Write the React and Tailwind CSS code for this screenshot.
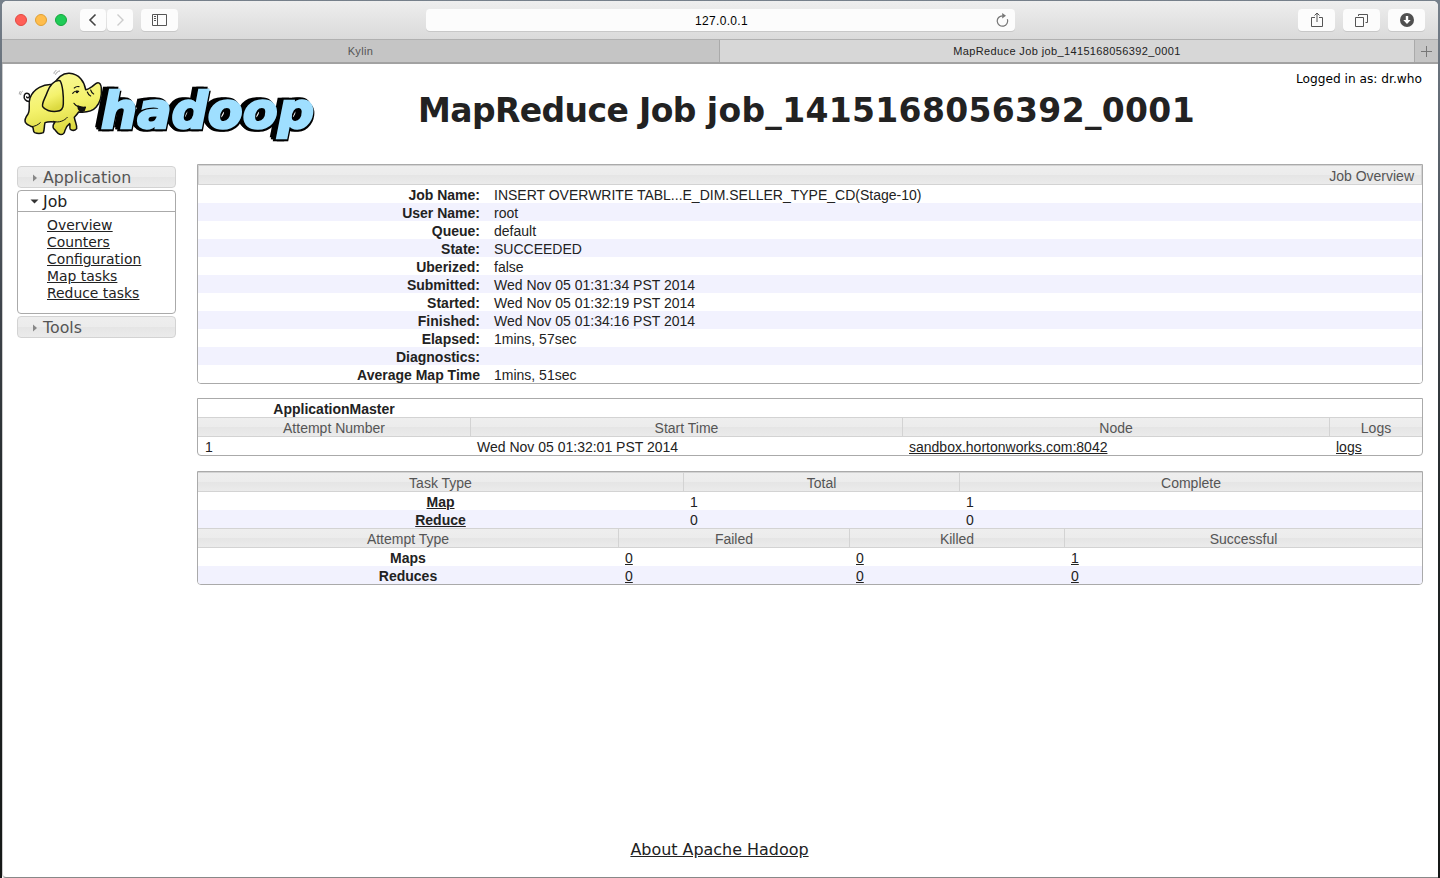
function Arrow({ open }) {
  return (
    <svg className="ml-[11px] mr-1 h-3 w-2.5 shrink-0" viewBox="0 0 10 12">
      <path d={open ? "M1.500 3.500h8L5.500 7.500z" : "M4 2.500l4 3.500-4 3.500z"} fill={open ? "#333" : "#888"} />
    </svg>
  );
}

const HEAD = "border-[#d3d3d3] bg-[linear-gradient(#eee_0%,#ececec_50%,#e5e5e5_50%,#ebebeb_100%)] text-center text-[#555]";

function HeadRow({ cols, cells }) {
  return (
    <div className={"grid " + cols}>
      {cells.map((c, i) => (
        <div key={c} className={HEAD + " h-5 border-y leading-[20px]" + (i < cells.length - 1 ? " border-r" : "")}>{c}</div>
      ))}
    </div>
  );
}

const overview = [
  ["Job Name:", "INSERT OVERWRITE TABL...E_DIM.SELLER_TYPE_CD(Stage-10)"],
  ["User Name:", "root"],
  ["Queue:", "default"],
  ["State:", "SUCCEEDED"],
  ["Uberized:", "false"],
  ["Submitted:", "Wed Nov 05 01:31:34 PST 2014"],
  ["Started:", "Wed Nov 05 01:32:19 PST 2014"],
  ["Finished:", "Wed Nov 05 01:34:16 PST 2014"],
  ["Elapsed:", "1mins, 57sec"],
  ["Diagnostics:", ""],
  ["Average Map Time", "1mins, 51sec"],
];

function Logo() {
  return (
    <svg className="h-[78px] w-[304px] overflow-visible" viewBox="16 66 304 78" role="img">
      <defs>
        <linearGradient id="skin" x1="0" y1="0" x2="0.3" y2="1">
          <stop offset="0" stopColor="#fbfba0" />
          <stop offset="0.6" stopColor="#f4f26c" />
          <stop offset="1" stopColor="#dcd940" />
        </linearGradient>
      </defs>
      <text
        x="101"
        y="127.500"
        textLength="213"
        lengthAdjust="spacingAndGlyphs"
        fill="#9fdfff"
        stroke="#9fdfff"
        strokeWidth="2.4"
        strokeLinejoin="miter"
        className="font-['DejaVu_Sans',sans-serif] text-[50px] font-bold italic [filter:drop-shadow(-4px_0_0_#000)_drop-shadow(1.5px_2px_0_#000)_drop-shadow(-1.5px_-2px_0_#000)]"
      >
        hadoop
      </text>
      <g transform="translate(16 66) scale(.3333)" fill="url(#skin)" stroke="#111" strokeWidth="4.500" strokeLinejoin="round" strokeLinecap="round">
        <path d="M42 106C30 108 22 98 25 88C29 78 44 82 40 92C38 97 33 96 32 93" fill="none" />
        <path d="M112 56C84 52 52 68 42 96C36 114 44 130 36 144C30 152 25 161 28 169C32 177 42 179 50 183C54 189 50 197 56 200C64 203 74 203 82 200C86 190 84 182 87 170C97 166 107 167 117 168C111 176 109 182 113 188C121 194 123 202 131 205C141 207 145 203 147 193C149 185 153 179 161 173C164 179 159 185 163 190C170 194 178 194 182 188C184 178 177 168 175 154C180 149 184 144 188 138C212 140 228 138 240 124C254 108 258 90 256 66C255 56 252 50 246 50C240 50 236 56 228 62C221 67 215 71 209 71C205 47 190 24 160 22C138 21 125 36 112 56z" />
        <path d="M132 44C114 40 100 62 94 78C88 96 76 112 80 122C86 132 104 138 122 136C136 135 142 128 142 114C143 90 140 56 132 44z" />
        <path d="M170 82c5-7 12-8 18-6M175 66c4-4 9-5 14-4M214 78c2 6 6 10 10 12M224 72c2 6 5 10 9 12M174 112c8 10 20 14 34 12" fill="none" strokeWidth="3.500" />
        <circle cx="183" cy="78" r="4" fill="#151515" stroke="none" />
        <path d="M186 120c0 12 8 20 18 14l4-10c-8 2-14-1-22-4z" fill="#151515" />
        <path d="M45 182c12 0 22-6 28-12M112 166c16 6 34-2 42-12" fill="none" strokeWidth="3" />
        <path d="M119 25c2-6 6-9 12-10M114 22c0-4 3-7 6-8M14 86c0-5 2-8 5-10M10 84c0-4 1-6 3-8" fill="none" stroke="#888" strokeWidth="2.500" />
      </g>
    </svg>
  );
}

const BTN = "flex h-[22px] items-center justify-center rounded bg-[#fcfcfc] shadow-[0_1px_0_#c8c8c8]";

export default function App() {
  return (
    <div className="h-[878px] w-[1440px] overflow-hidden bg-[linear-gradient(#76808b,#3e444b_35%,#202526_60%,#151817)] px-[2px] pt-px font-['Liberation_Sans',sans-serif]">
      <div className="flex h-[877px] flex-col overflow-hidden rounded-t-[5px] bg-white">
        <header className="flex h-[39px] shrink-0 items-center border-b border-[#b0b0b0] bg-[linear-gradient(#eeeeee,#dadada)] px-[13px]">
          <div className="flex gap-2">
            <i className="size-3 rounded-full border border-[#e14942] bg-[#ff5f57]" />
            <i className="size-3 rounded-full border border-[#dfa034] bg-[#ffbd4c]" />
            <i className="size-3 rounded-full border border-[#15a73c] bg-[#1fcb57]" />
          </div>
          <div className="ml-[13px] flex gap-px">
            <div className={BTN + " w-[26px]"}><svg width="10" height="14" viewBox="0 0 10 14" fill="none" stroke="#444" strokeWidth="1.6"><path d="M7.500 1.500L2 7l5.500 5.500" /></svg></div>
            <div className={BTN + " w-[26px]"}><svg width="10" height="14" viewBox="0 0 10 14" fill="none" stroke="#ccc" strokeWidth="1.4"><path d="M2.500 1.500L8 7l-5.500 5.500" /></svg></div>
          </div>
          <div className={BTN + " ml-2 w-[37px]"}><svg width="15" height="12" viewBox="0 0 15 12" fill="none" stroke="#555"><path d="M.5 .5h14v11H.5zM5.500 .5v11M2 2.500h2M2 4.500h2M2 6.500h2" /></svg></div>
          <div className="ml-[248px] flex h-[22px] w-[589px] items-center rounded bg-[#fcfcfc] shadow-[0_1px_0_#c8c8c8]">
            <div className="flex-1 pl-[21px] pt-px text-center text-[12px] tracking-[.33px] text-black">127.0.0.1</div>
            <svg className="mr-[6px]" width="13" height="14" viewBox="0 0 13 14" fill="none" stroke="#777" strokeWidth="1.2"><path d="M11.300 6.200a5.200 5.200 0 1 1-4.800-3.400" /><path d="M6.200 0L10 2.700 6.200 5.400z" fill="#777" stroke="none" /></svg>
          </div>
          <div className="ml-auto flex gap-2">
            <div className={BTN + " w-[37px]"}><svg width="12" height="16" viewBox="0 0 12 16" fill="none" stroke="#555"><path d="M4 5.500H.5v9h11v-9H8M6 10V1M3.500 3.500L6 1l2.500 2.500" /></svg></div>
            <div className={BTN + " w-[37px]"}><svg width="13" height="13" viewBox="0 0 13 13" fill="none" stroke="#555"><path d="M.5 3.500h8v9h-8zM3.500 2V.5h9v8H10.500" /></svg></div>
            <div className={BTN + " w-[37px]"}><svg width="14" height="14" viewBox="0 0 14 14"><circle cx="7" cy="7" r="7" fill="#505050" /><path d="M5.800 3h2.400v4h2.500L7 11 3.300 7h2.500z" fill="#fff" /></svg></div>
          </div>
        </header>
        <nav className="flex h-6 shrink-0 border-b-2 border-[#a2a2a2] text-center text-[11px] leading-[23px] tracking-[.37px]">
          <div className="w-[718px] border-r border-[#aaa] bg-[#c5c5c5] text-[#555]">Kylin</div>
          <div className="flex-1 bg-[#d7d7d7] text-[#222]">MapReduce Job job_1415168056392_0001</div>
          <div className="flex w-[24px] items-center justify-center border-l border-[#aaa] bg-[#c5c5c5]"><svg width="11" height="11" viewBox="0 0 11 11" stroke="#777"><path d="M5.500 0v11M0 5.500h11" /></svg></div>
        </nav>
        <div className="flex min-h-0 flex-1 flex-col rounded-bl border-b border-l border-b-[#888] border-l-[#ccc] text-[14px] text-[#222]">
          <div className="flex h-[100px] shrink-0 pl-[13px] pr-4 font-['DejaVu_Sans',sans-serif]">
            <div className="w-[304px] pt-[2px]"><Logo /></div>
            <h1 className="ml-[98px] mt-[25px] w-[790px] whitespace-nowrap text-[33px] font-bold leading-[44px]"><span className="tracking-[-.6px]">MapReduce Job </span><span className="tracking-[.33px]">job_1415168056392_0001</span></h1>
            <div className="ml-auto mt-[7px] whitespace-nowrap text-[12.200px] leading-4 text-black">Logged in as: dr.who</div>
          </div>
          <div className="flex items-start pl-[14px] pr-[15px]">
            <aside className="mt-[2px] flex w-[159px] shrink-0 flex-col gap-[2px] font-['DejaVu_Sans',sans-serif] text-[15.800px] leading-5">
              <div className={HEAD + " flex h-[22px] items-center rounded border pt-px"}><Arrow />Application</div>
              <div className="h-[124px] rounded border border-[#aaa]">
                <div className="flex h-[21px] items-center border-b border-[#aaa] pt-px"><Arrow open />Job</div>
                <div className="flex flex-col items-start pl-[29px] pt-[5px] text-[13.900px] leading-[17px] underline">
                  {["Overview", "Counters", "Configuration", "Map tasks", "Reduce tasks"].map((t) => <a key={t}>{t}</a>)}
                </div>
              </div>
              <div className={HEAD + " flex h-[22px] items-center rounded border pt-px"}><Arrow />Tools</div>
            </aside>
            <main className="ml-[21px] flex w-[1226px] flex-col">
              <section className="h-[220px] overflow-hidden rounded-b border border-[#aaa]">
                <div className={HEAD + " h-5 border pr-[7px] !text-right leading-[20px]"}>Job Overview</div>
                {overview.map(([k, v], i) => (
                  <div key={k} className={"grid h-[18px] grid-cols-[282px_1fr] gap-[14px] leading-[20px] " + (i % 2 ? "bg-[#f2f2fe]" : "bg-white")}>
                    <b className="text-right">{k}</b><span className="whitespace-nowrap">{v}</span>
                  </div>
                ))}
              </section>
              <section className="mt-[14px] h-[58px] overflow-hidden rounded-b border border-[#aaa]">
                <div className="h-[18px] w-[272px] text-center font-bold leading-5">ApplicationMaster</div>
                <HeadRow cols="grid-cols-[273px_432px_427px_92px]" cells={["Attempt Number", "Start Time", "Node", "Logs"]} />
                <div className="grid h-[18px] grid-cols-[272px_432px_427px_1fr] leading-[20px] *:pl-[7px]">
                  <span>1</span><span>Wed Nov 05 01:32:01 PST 2014</span><u>sandbox.hortonworks.com:8042</u><u>logs</u>
                </div>
              </section>
              <section className="mt-[15px] h-[114px] overflow-hidden rounded-b border border-[#aaa]">
                <HeadRow cols="grid-cols-[486px_276px_462px]" cells={["Task Type", "Total", "Complete"]} />
                {[["Map", "1", "1"], ["Reduce", "0", "0"]].map(([a, b, c], i) => (
                  <div key={a} className={"grid h-[18px] grid-cols-[485px_276px_1fr] leading-[20px] " + (i ? "bg-[#f2f2fe]" : "")}>
                    <b className="text-center underline">{a}</b><span className="pl-[7px]">{b}</span><span className="pl-[7px]">{c}</span>
                  </div>
                ))}
                <HeadRow cols="grid-cols-[421px_231px_215px_357px]" cells={["Attempt Type", "Failed", "Killed", "Successful"]} />
                {[["Maps", "0", "0", "1"], ["Reduces", "0", "0", "0"]].map(([a, b, c, d], i) => (
                  <div key={a} className={"grid h-[18px] grid-cols-[420px_231px_215px_1fr] leading-[20px] " + (i ? "bg-[#f2f2fe]" : "")}>
                    <b className="text-center">{a}</b><u className="pl-[7px]">{b}</u><u className="pl-[7px]">{c}</u><u className="pl-[7px]">{d}</u>
                  </div>
                ))}
              </section>
            </main>
          </div>
          <footer className="mb-[17px] mt-auto pr-[2px] text-center font-['DejaVu_Sans',sans-serif] text-[15.950px] leading-5 underline">About Apache Hadoop</footer>
        </div>
      </div>
    </div>
  );
}
